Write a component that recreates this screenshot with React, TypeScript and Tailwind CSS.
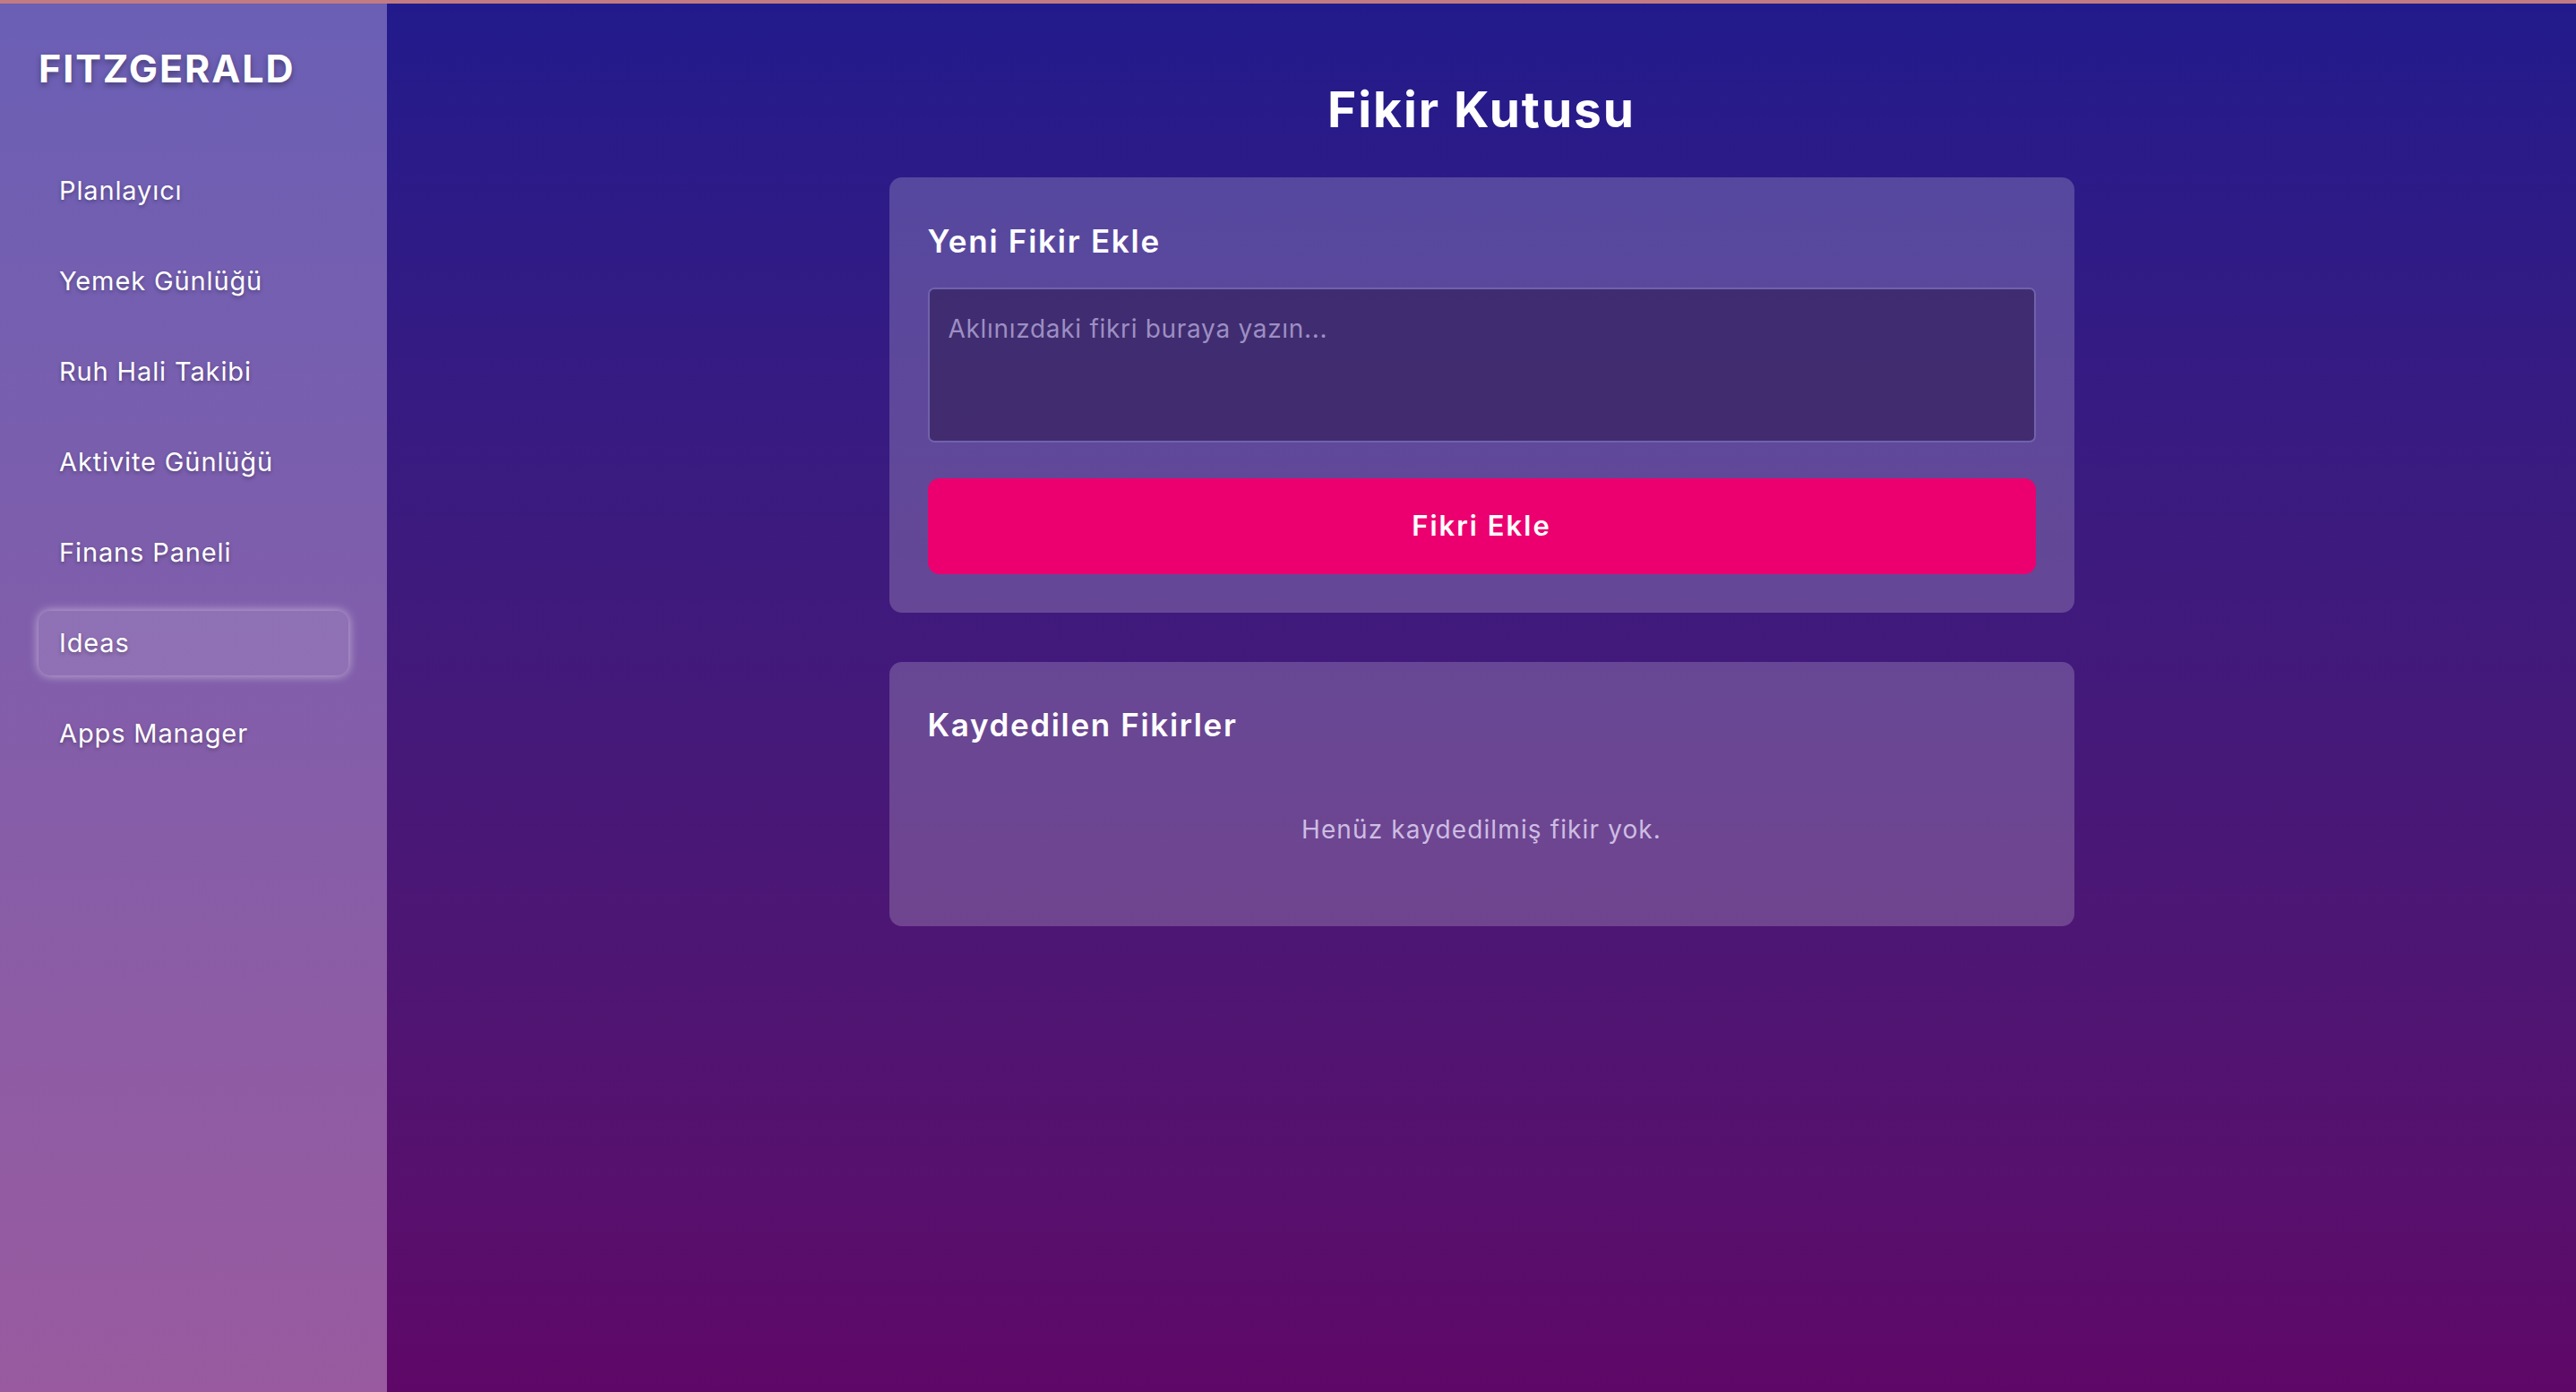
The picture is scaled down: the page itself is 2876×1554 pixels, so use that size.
import { useState } from "react"

const navItems = [
  "Planlayıcı",
  "Yemek Günlüğü",
  "Ruh Hali Takibi",
  "Aktivite Günlüğü",
  "Finans Paneli",
  "Ideas",
  "Apps Manager",
]

export default function App() {
  const [idea, setIdea] = useState("")
  const [ideas, setIdeas] = useState<string[]>([])

  const addIdea = () => {
    if (!idea.trim()) return
    setIdeas([...ideas, idea.trim()])
    setIdea("")
  }

  return (
    <div className="flex flex-col h-[1554px] w-full font-['Inter',sans-serif] text-white">
      {/* thin top strip */}
      <div className="h-[4px] shrink-0 bg-[#c27b82]" />

      <div className="flex flex-1 min-h-0 bg-gradient-to-b from-[#221a8c] to-[#5f0768]">
        {/* Sidebar */}
        <aside className="w-[432px] shrink-0 px-[43px] pt-[46px] bg-gradient-to-b from-[#6a5fb5] to-[#995a9f]">
          <h1 className="text-[43px] font-bold leading-[52px] tracking-[0.045em] [text-shadow:0_3px_6px_rgba(0,0,0,0.35)]">
            FITZGERALD
          </h1>
          <nav className="mt-[75px] flex flex-col gap-[29px]">
            {navItems.map((item) => (
              <SideItem key={item} label={item} active={item === "Ideas"} />
            ))}
          </nav>
        </aside>

        {/* Main */}
        <main className="flex-1 min-w-0 flex flex-col items-center pt-[85px]">
          <h2 className="text-[55px] font-bold leading-[66px] tracking-[0.035em]">Fikir Kutusu</h2>

          <div className="w-[1323px] mt-[43px] flex flex-col gap-[55px]">
            <section className="rounded-[14px] bg-white/20 p-[43px]">
              <h3 className="text-[35px] font-semibold leading-[56px] tracking-[0.05em]">Yeni Fikir Ekle</h3>
              <textarea
                value={idea}
                onChange={(e) => setIdea(e.target.value)}
                placeholder="Aklınızdaki fikri buraya yazın..."
                className="mt-[24px] block w-full h-[173px] resize-none rounded-[7px] border-2 border-[#6f62ab] bg-[#1e0a3c]/45 px-[21px] pt-[26px] pb-[12px] text-[28px] leading-[36px] tracking-[0.025em] text-white placeholder:text-[#9c8fc3] outline-none"
              />
              <button
                onClick={addIdea}
                className="mt-[40px] w-full h-[107px] rounded-[13px] bg-[#ec0070] text-[31px] font-semibold tracking-[0.065em]"
              >
                Fikri Ekle
              </button>
            </section>

            <section className="rounded-[14px] bg-white/20 p-[43px]">
              <h3 className="text-[35px] font-semibold leading-[54px] tracking-[0.047em]">Kaydedilen Fikirler</h3>
              {ideas.length === 0 ? (
                <p className="mt-[26px] py-[47px] text-center text-[28px] leading-[35px] tracking-[0.04em] text-[#cdbde3]">
                  Henüz kaydedilmiş fikir yok.
                </p>
              ) : (
                <ul className="mt-[26px] flex flex-col gap-4">
                  {ideas.map((x, i) => (
                    <li key={i} className="rounded-[10px] bg-white/10 px-6 py-4 text-[28px]">
                      {x}
                    </li>
                  ))}
                </ul>
              )}
            </section>
          </div>
        </main>
      </div>
    </div>
  )
}

function SideItem({ label, active }: { label: string; active: boolean }) {
  return (
    <a
      href="#"
      className={
        active
          ? "flex items-center h-[72px] px-[23px] rounded-[13px] bg-white/12 shadow-[0_0_12px_rgba(255,255,255,0.55)] text-[29px] tracking-[0.03em] [text-shadow:0_2px_4px_rgba(0,0,0,0.3)]"
          : "flex items-center h-[72px] px-[23px] rounded-[13px] text-[29px] tracking-[0.03em] [text-shadow:0_2px_4px_rgba(0,0,0,0.3)]"
      }
    >
      {label}
    </a>
  )
}
